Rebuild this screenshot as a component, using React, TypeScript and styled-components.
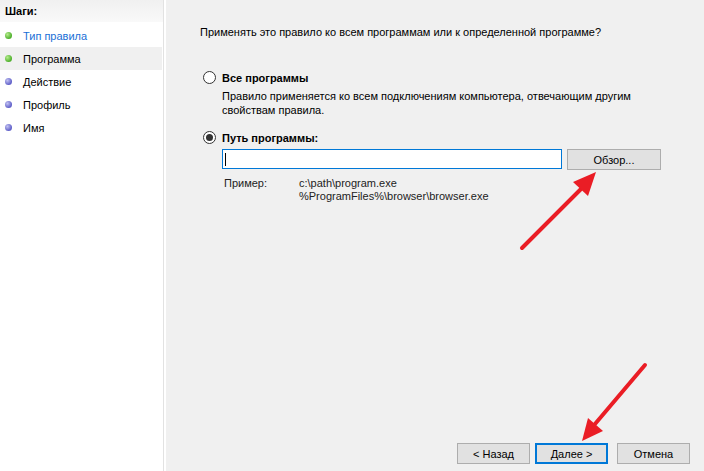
import React from 'react';
import styled, { createGlobalStyle } from 'styled-components';

const GlobalStyle = createGlobalStyle`
  html, body {
    margin: 0;
    padding: 0;
    background: #ffffff;
  }
  * {
    box-sizing: border-box;
  }
`;

const Window = styled.div`
  position: relative;
  display: flex;
  width: 704px;
  height: 471px;
  overflow: hidden;
  background: #ffffff;
  font-family: 'Liberation Sans', Arial, sans-serif;
  font-size: 11px;
  color: #000;
`;

const Sidebar = styled.div`
  width: 164px;
  flex-shrink: 0;
  background: #ffffff;
  border-right: 1px solid #e2e2e2;
  display: flex;
  flex-direction: column;
`;

const SidebarHeader = styled.div`
  height: 22px;
  display: flex;
  align-items: center;
  padding-left: 5px;
  font-weight: bold;
  background: linear-gradient(to bottom, #f0f0f0, #f9f9f9);
`;

const StepList = styled.ul`
  list-style: none;
  margin: 2px 1px 0 0;
  padding: 0;
`;

const StepRow = styled.li<{ $active?: boolean; $current?: boolean }>`
  height: 23px;
  display: flex;
  align-items: center;
  gap: 11px;
  padding-left: 5px;
  background: ${(p) => (p.$active ? '#f0f0f0' : 'transparent')};
  color: ${(p) => (p.$current ? '#1a6fd6' : '#000')};
`;

const Dot = styled.span<{ $done?: boolean }>`
  width: 7px;
  height: 7px;
  border-radius: 50%;
  background: ${(p) =>
    p.$done
      ? 'radial-gradient(circle at 35% 35%, #b6ec8e, #4caf2a 70%)'
      : 'radial-gradient(circle at 35% 35%, #c2c2f2, #5e5ec8 70%)'};
`;

const Content = styled.div`
  flex: 1;
  margin-left: 2px;
  background: #f0f0f0;
  display: flex;
  flex-direction: column;
  padding: 25px 0 7px 34px;
`;

const Question = styled.div`
  line-height: 15px;
`;

const Options = styled.div`
  margin-top: 30px;
  padding-left: 3px;
  display: flex;
  flex-direction: column;
`;

const OptionRow = styled.div`
  display: flex;
  align-items: center;
  gap: 6px;
  height: 15px;
  font-weight: bold;
`;

const Radio = styled.span<{ $checked?: boolean }>`
  width: 13px;
  height: 13px;
  border-radius: 50%;
  border: 1px solid #333;
  background: #fff;
  display: flex;
  align-items: center;
  justify-content: center;

  &::after {
    content: '';
    display: ${(p) => (p.$checked ? 'block' : 'none')};
    width: 7px;
    height: 7px;
    border-radius: 50%;
    background: #333;
  }
`;

const Indented = styled.div`
  padding-left: 19px;
`;

const Description = styled(Indented)`
  margin-top: 4px;
  line-height: 14px;
  margin-bottom: 13px;
`;

const PathRow = styled(Indented)`
  margin-top: 4px;
  display: flex;
  gap: 5px;
`;

const PathInput = styled.div`
  width: 340px;
  height: 20px;
  background: #fff;
  border: 1px solid #0078d7;
  display: flex;
  align-items: center;
  padding-left: 2px;

  &::before {
    content: '';
    width: 1px;
    height: 13px;
    background: #000;
  }
`;

const Button = styled.button<{ $focused?: boolean; $width?: number }>`
  width: ${(p) => p.$width ?? 73}px;
  height: 21px;
  padding: 0;
  font-family: inherit;
  font-size: 11px;
  color: #000;
  background: #e1e1e1;
  border: ${(p) => (p.$focused ? '2px solid #0078d7' : '1px solid #adadad')};
`;

const Example = styled(Indented)`
  margin-top: 7px;
  padding-left: 21px;
  display: flex;
  line-height: 13px;
  color: #222;
`;

const ExampleLabel = styled.div`
  width: 75px;
`;

const Footer = styled.div`
  margin-top: auto;
  display: flex;
  justify-content: flex-end;
  padding-right: 14px;
`;

const NavGroup = styled.div`
  display: flex;
  gap: 5px;
  margin-right: 9px;
`;

const Overlay = styled.svg`
  position: absolute;
  left: 0;
  top: 0;
  pointer-events: none;
`;

const steps = ['Тип правила', 'Программа', 'Действие', 'Профиль', 'Имя'];

function Arrow({ tail, neck, head }: { tail: number[]; neck: number[]; head: number[] }) {
  return (
    <>
      <line
        x1={tail[0]}
        y1={tail[1]}
        x2={neck[0]}
        y2={neck[1]}
        stroke="#ea1d25"
        strokeWidth={4}
        strokeLinecap="round"
      />
      <polygon points={head.join(',')} fill="#ea1d25" />
    </>
  );
}

export default function App() {
  return (
    <>
      <GlobalStyle />
      <Window>
        <Sidebar>
          <SidebarHeader>Шаги:</SidebarHeader>
          <StepList>
            {steps.map((s, i) => (
              <StepRow key={s} $active={i === 1} $current={i === 0}>
                <Dot $done={i < 2} />
                {s}
              </StepRow>
            ))}
          </StepList>
        </Sidebar>
        <Content>
          <Question>Применять это правило ко всем программам или к определенной программе?</Question>
          <Options>
            <OptionRow>
              <Radio />
              Все программы
            </OptionRow>
            <Description>
              Правило применяется ко всем подключениям компьютера, отвечающим другим
              <br />
              свойствам правила.
            </Description>
            <OptionRow>
              <Radio $checked />
              Путь программы:
            </OptionRow>
            <PathRow>
              <PathInput />
              <Button $width={94}>Обзор...</Button>
            </PathRow>
            <Example>
              <ExampleLabel>Пример:</ExampleLabel>
              <div>
                c:\path\program.exe
                <br />
                %ProgramFiles%\browser\browser.exe
              </div>
            </Example>
          </Options>
          <Footer>
            <NavGroup>
              <Button>&lt; Назад</Button>
              <Button $focused>Далее &gt;</Button>
            </NavGroup>
            <Button>Отмена</Button>
          </Footer>
        </Content>
        <Overlay width={704} height={471}>
          <Arrow tail={[522, 248]} neck={[581, 189]} head={[596, 172, 573, 182, 588, 196]} />
          <Arrow tail={[645, 365]} neck={[595, 424]} head={[582, 441, 588, 418, 603, 431]} />
        </Overlay>
      </Window>
    </>
  );
}
